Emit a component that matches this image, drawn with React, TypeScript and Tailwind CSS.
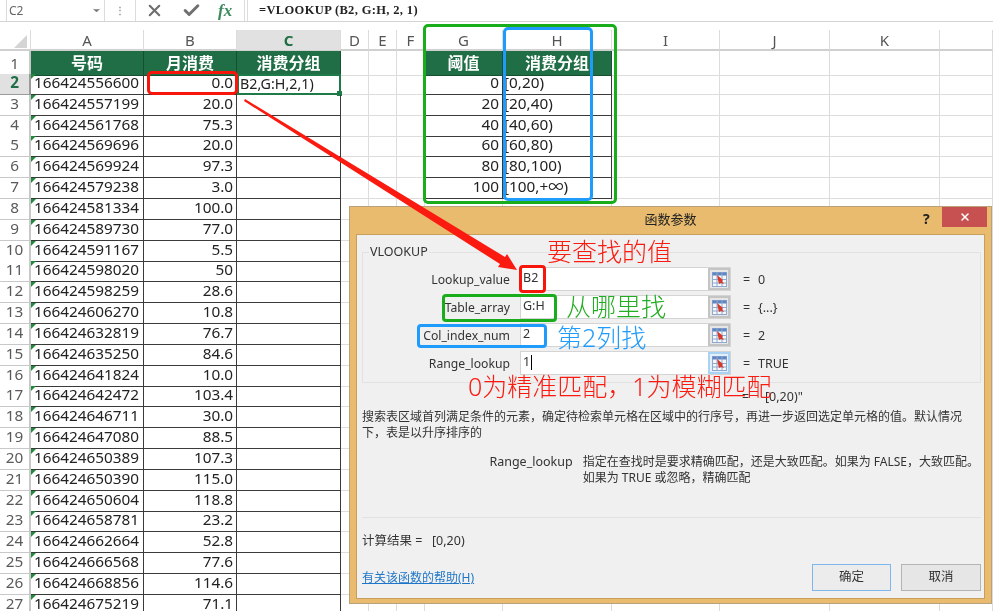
import React from "react";
import { X, Check, ChevronDown } from "lucide-react";

const data: [string, string][] = [
  ["166424556600", "0.0"],["166424557199", "20.0"],["166424561768", "75.3"],["166424569696", "20.0"],
  ["166424569924", "97.3"],["166424579238", "3.0"],["166424581334", "100.0"],["166424589730", "77.0"],
  ["166424591167", "5.5"],["166424598020", "50"],["166424598259", "28.6"],["166424606270", "10.8"],
  ["166424632819", "76.7"],["166424635250", "84.6"],["166424641824", "10.0"],["166424642472", "103.4"],
  ["166424646711", "30.0"],["166424647080", "88.5"],["166424650389", "107.3"],["166424650390", "115.0"],
  ["166424650604", "118.8"],["166424658781", "23.2"],["166424662664", "52.8"],["166424666568", "77.6"],
  ["166424668856", "114.6"],["166424675219", "71.1"],
];
const lookup: [string, string][] = [
  ["0", "[0,20)"],["20", "[20,40)"],["40", "[40,60)"],["60", "[60,80)"],["80", "[80,100)"],["100", "[100,+∞)"],
];

const template = "grid grid-cols-[31px_113px_93px_104px_28px_28px_28px_78px_109px_108px_110px_110px_53px]";
const light = "border-r border-b border-[#dcdcdc]";
const dark = "border-r border-b border-[#3a3a3a]";

function Light() {
  return <div className={light} />;
}

function Row({ n, a, b, g, h, active }: { n: number; a: string; b: string; g?: string; h?: string; active?: boolean }) {
  return (
    <div className={`${template} h-[20.83px] text-[15.3px] leading-[17px] text-[#222]`}>
      <div className={`flex items-center justify-center border-r-2 border-b pb-[3px] ${active ? "border-[#9a9a9a] bg-[#e1e1e1] font-bold text-[#1f6e45]" : "border-[#c8c8c8] bg-white text-[#5a5a5a]"}`}>
        {n}
      </div>
      <div className={`relative pl-[3px] ${dark}`}>
        <span className="absolute left-0 top-0 h-0 w-0 border-t-[5px] border-r-[5px] border-t-[#1e8a3c] border-r-transparent" />
        {a}
      </div>
      <div className={`pr-[3px] text-right ${dark}`}>{b}</div>
      <div className={`relative pl-[1px] ${active ? "border-2 border-[#1f7a4a]" : dark}`}>
        {active ? <span className="block text-[14.3px] leading-[15px]">B2,G:H,2,1)</span> : null}
        {active ? <span className="absolute -bottom-[3px] -right-[3px] h-[5px] w-[5px] bg-[#1f7a4a]" /> : null}
      </div>
      <Light /><Light /><Light />
      {g !== undefined ? <div className={`pr-[3px] text-right ${dark}`}>{g}</div> : <Light />}
      {h !== undefined ? <div className={`pl-[1px] ${dark}`}>{h}</div> : <Light />}
      <Light /><Light /><Light /><Light />
    </div>
  );
}

function Letter({ children, active }: { children?: string; active?: boolean }) {
  return (
    <div className={`flex items-center justify-center border-r border-[#dcdcdc] ${active ? "bg-[#e1e1e1] font-bold text-[#1f6e45]" : "text-[#555]"}`}>
      {children}
    </div>
  );
}

function GreenHead({ children }: { children: string }) {
  return (
    <div className="flex items-center justify-center border-r border-b border-[#174f33] bg-[#1f6e45] text-[16px] font-bold text-white">
      {children}
    </div>
  );
}

function RefIcon({ focus }: { focus?: boolean }) {
  return (
    <div className={`flex w-[22px] items-center justify-center border-2 ${focus ? "border-[#a9d2f3] bg-[#e3effa]" : "border-[#c4c4c4] bg-[#e6e6e6]"}`}>
      <svg width="15" height="15" viewBox="0 0 15 15">
        <rect x="0.5" y="0.5" width="14" height="14" fill="#f4f7fb" stroke="#8fa9cf" />
        <rect x="0.5" y="0.5" width="14" height="3" fill="#5f86c2" />
        <path d="M0 7.5h15M0 11h15M5 0v15M10 0v15" stroke="#8fa9cf" strokeWidth="1" />
        <path d="M5 3l6 5-1 1 2 3-3-1-2 1-1-4z" fill="#d8382a" />
      </svg>
    </div>
  );
}

function ArgRow({ label, value, result, focus }: { label: string; value: string; result: string; focus?: boolean }) {
  return (
    <div className="flex h-[24px] items-center">
      <div className="w-[157px] pr-[10px] pt-[2px] text-right text-[12.2px]">{label}</div>
      <div className="flex h-[24px] w-[211px] border border-[#d4d4d4] bg-white">
        <div className="flex-1 pl-[2px] leading-[20px]">
          {value}
          {focus ? <span className="ml-[1px] inline-block h-[15px] w-px bg-black align-middle" /> : null}
        </div>
        <RefIcon focus={focus} />
      </div>
      <div className="ml-[12px] w-[15px] pt-[2px]">=</div>
      <div className="pt-[2px]">{result}</div>
    </div>
  );
}

function Note({ className, children }: { className: string; children: string }) {
  return <div className={`absolute whitespace-nowrap text-[25px] font-light leading-[30px] ${className}`}>{children}</div>;
}

function Box({ className }: { className: string }) {
  return <div className={`absolute border-[3px] ${className}`} />;
}

export default function App() {
  return (
    <div className="relative h-[611px] w-[993px] overflow-hidden bg-white font-['Noto_Sans','Noto_Sans_CJK_SC',sans-serif] blur-[0.35px]">
      {/* formula bar */}
      <div className="flex h-[22px] items-stretch border-b border-[#d4d4d4] bg-white">
        <div className="ml-[6px] flex w-[99px] items-center justify-between border-x border-[#dcdcdc] pl-[2px] pr-[2px] text-[12px] text-[#666]">
          C2
          <ChevronDown size={11} className="text-[#777]" fill="#777" />
        </div>
        <div className="flex w-[30px] items-center justify-center text-[10px] font-bold tracking-tighter text-[#999]">⋮</div>
        <div className="flex w-[110px] items-center border-x border-[#dcdcdc]">
          <X size={19} strokeWidth={2.6} className="ml-[9px] text-[#6e6e6e]" />
          <Check size={19} strokeWidth={3.8} className="ml-[18px] text-[#707070]" />
          <span className="ml-[17px] font-['Liberation_Serif',serif] text-[17px] font-bold italic leading-[17px] text-[#3b8a5a]">fx</span>
        </div>
        <div className="ml-[2px] flex flex-1 items-center border-l border-[#dcdcdc] pl-[11px] font-['Liberation_Serif',serif] text-[12.5px] font-bold tracking-[0.35px] text-[#222]">
          =VLOOKUP (B2, G:H, 2, 1)
        </div>
      </div>
      <div className="h-[8px]" />

      {/* column letters */}
      <div className={`${template} h-[21px] border-b-2 border-[#d0d0d0] text-[15px] leading-[20px]`}>
        <div className="relative border-r border-[#dcdcdc]">
          <span className="absolute bottom-[2px] right-[3px] h-0 w-0 border-b-[13px] border-l-[13px] border-b-[#d4d4d4] border-l-transparent" />
        </div>
        <Letter>A</Letter><Letter>B</Letter><Letter active>C</Letter>
        <Letter>D</Letter><Letter>E</Letter><Letter>F</Letter><Letter>G</Letter><Letter>H</Letter>
        <Letter>I</Letter><Letter>J</Letter><Letter>K</Letter><Letter />
      </div>

      {/* row 1 */}
      <div className={`${template} h-[23px] text-[15.3px]`}>
        <div className="flex items-center justify-center border-r-2 border-b border-[#c8c8c8] text-[#5a5a5a]">1</div>
        <GreenHead>号码</GreenHead><GreenHead>月消费</GreenHead><GreenHead>消费分组</GreenHead>
        <Light /><Light /><Light />
        <GreenHead>阈值</GreenHead><GreenHead>消费分组</GreenHead>
        <Light /><Light /><Light /><Light />
      </div>

      {data.map(([a, b], i) => (
        <Row key={a} n={i + 2} a={a} b={b} g={lookup[i]?.[0]} h={lookup[i]?.[1]} active={i === 0} />
      ))}

      {/* dialog window */}
      <div className="absolute left-[349px] top-[206px] h-[398px] w-[643px] border border-[#b9a27a] bg-[#e8bb6e] text-[12.5px] text-[#333]">
        <div className="relative flex h-[27px] items-center justify-center pb-[1px] text-[13px] text-[#222]">
          函数参数
          <span className="absolute left-[573px] top-[1px] text-[14px] font-bold text-[#222]">?</span>
          <span className="absolute right-[4px] top-0 flex h-[20px] w-[45px] items-center justify-center bg-[#c75050] text-white">
            <X size={12} strokeWidth={3} />
          </span>
        </div>
        <div className="mx-[6px] h-[365px] border border-[#c79e5c] bg-[#f0f0f0] px-[5px] pt-[17px]">
          {/* VLOOKUP group */}
          <div className="relative h-[131px] w-[619px] border border-[#e2e2e2] pt-[14px]">
            <span className="absolute -top-[9px] left-[6px] bg-[#f0f0f0] px-[1px] leading-[16px]">VLOOKUP</span>
            <div className="flex flex-col gap-[4px]">
              <ArgRow label="Lookup_value" value="B2" result="0" />
              <ArgRow label="Table_array" value="G:H" result="{...}" />
              <ArgRow label="Col_index_num" value="2" result="2" />
              <ArgRow label="Range_lookup" value="1" result="TRUE" focus />
            </div>
          </div>
          <div className="mt-[6px] flex h-[16px] pl-[380px] leading-[16px]">
            <span className="w-[23px]">=</span>
            <span>[0,20)"</span>
          </div>
          <div className="mt-[4px] w-[620px] text-[12px] leading-[16px]">
            搜索表区域首列满足条件的元素，确定待检索单元格在区域中的行序号，再进一步返回选定单元格的值。默认情况<br />下，表是以升序排序的
          </div>
          <div className="mt-[13px] flex whitespace-nowrap text-[12px] leading-[16px]">
            <div className="w-[211px] text-right text-[12.5px]">Range_lookup</div>
            <div className="ml-[10px]">
              指定在查找时是要求精确匹配，还是大致匹配。如果为 FALSE，大致匹配。<br />如果为 TRUE 或忽略，精确匹配
            </div>
          </div>
          <div className="mt-[31px] h-px w-[619px] bg-[#e2e2e2]" />
          <div className="mt-[15px] flex text-[12.5px] leading-[16px]">
            <span className="w-[70px]">计算结果 =</span>
            <span>[0,20)</span>
          </div>
          <div className="mt-[15px] flex w-[619px] items-start justify-between">
            <span className="mt-[6px] text-[12px] leading-[16px] text-[#1f76c8] underline">有关该函数的帮助(H)</span>
            <div className="flex gap-[10px]">
              <span className="flex h-[27px] w-[79px] items-center justify-center border border-[#7db7ec] bg-[#ececec]">确定</span>
              <span className="flex h-[27px] w-[80px] items-center justify-center border border-[#b4b4b4] bg-[#e6e6e6]">取消</span>
            </div>
          </div>
        </div>
      </div>

      {/* red arrow */}
      <svg className="absolute left-0 top-0" width="993" height="611" viewBox="0 0 993 611">
        <polygon points="244,101 245,99 505,257 507,254 517,270 498,267 500,264" fill="#fb1a10" />
      </svg>

      {/* outlines */}
      <Box className="left-[147px] top-[71px] h-[24px] w-[91px] rounded-[5px] border-[#f8160c]" />
      <Box className="left-[423px] top-[24px] h-[180px] w-[194px] rounded-[5px] border-[#19ad1c]" />
      <Box className="left-[503px] top-[27px] h-[174px] w-[90px] rounded-[5px] border-[#1e9bfb]" />
      <Box className="left-[519px] top-[265px] h-[28px] w-[27px] rounded-[4px] border-[#f8160c]" />
      <Box className="left-[442px] top-[294px] h-[28px] w-[115px] rounded-[4px] border-[#19ad1c]" />
      <Box className="left-[417px] top-[324px] h-[24px] w-[130px] rounded-[4px] border-[#1e9bfb]" />

      {/* notes */}
      <Note className="left-[547px] top-[236px] text-[#fb1a10]">要查找的值</Note>
      <Note className="left-[566px] top-[291px] text-[#22ad22]">从哪里找</Note>
      <Note className="left-[557px] top-[322px] text-[#1e9bfb]">第2列找</Note>
      <Note className="left-[468px] top-[371px] text-[#fb1a10]">0为精准匹配，1为模糊匹配</Note>
    </div>
  );
}
